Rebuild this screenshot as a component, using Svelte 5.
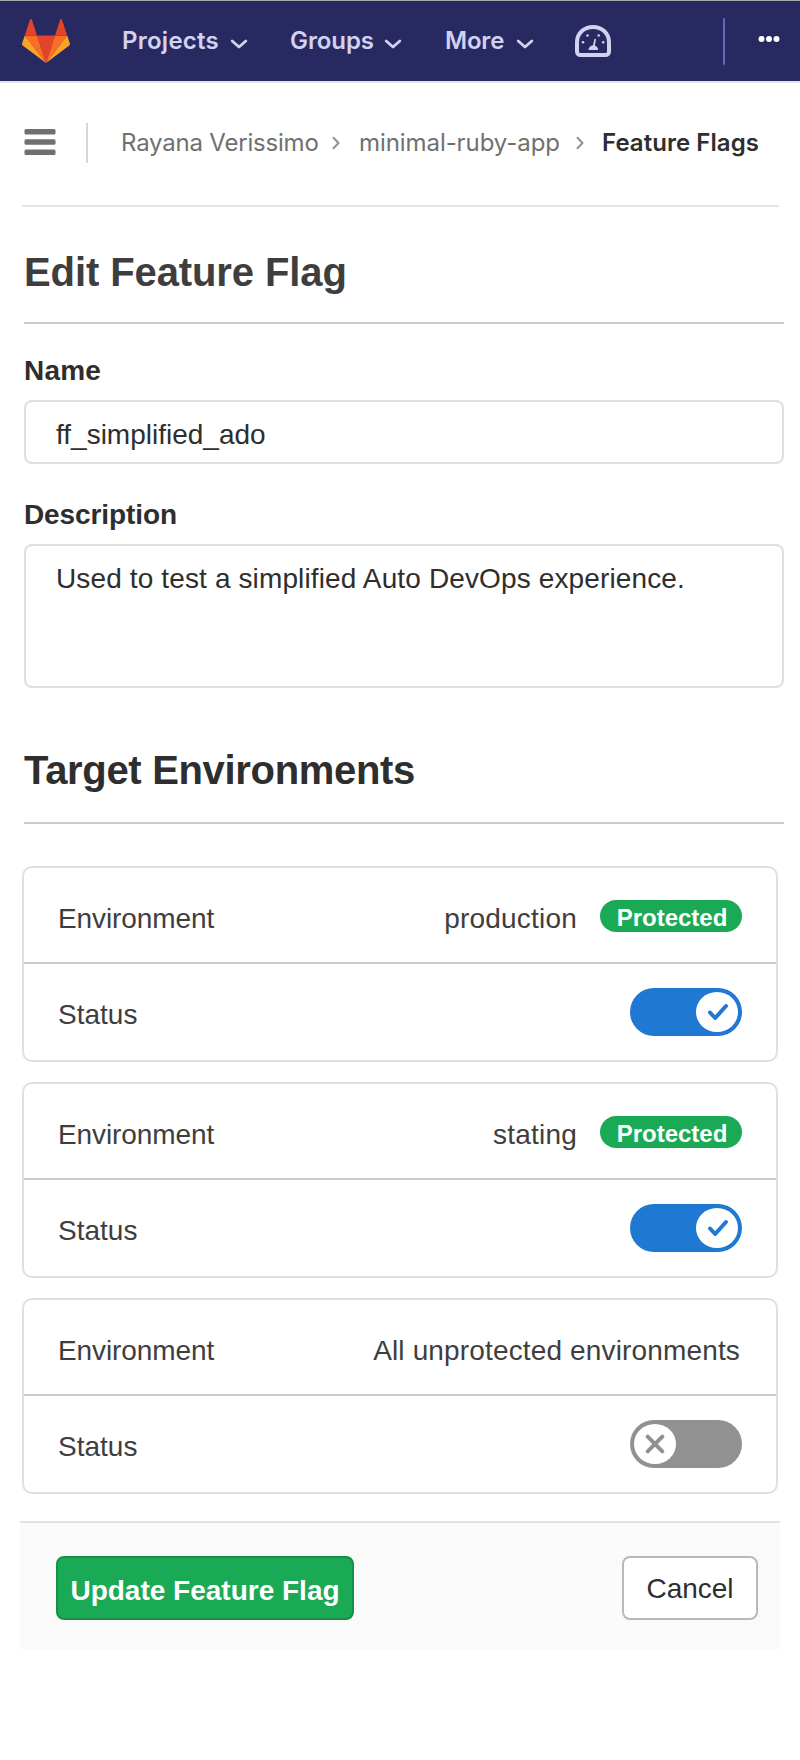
<script>
  const menus = [
    { label: 'Projects', cls: 'projects' },
    { label: 'Groups', cls: 'groups' },
    { label: 'More', cls: 'more' }
  ];
  let environments = $state([
    { name: 'production', isProtected: true, active: true },
    { name: 'stating', isProtected: true, active: true },
    { name: 'All unprotected environments', isProtected: false, active: false }
  ]);
</script>

<header>
  <svg class="logo" viewBox="0 0 48 44" width="48" height="44">
    <path fill="#e24329" d="M24 44 15 16.5h18z" />
    <path fill="#fc6d26" d="M24 44 15 16.5H2.8z" />
    <path fill="#fca326" d="M2.8 16.5.1 24.6c-.2.7 0 1.4.6 1.8L24 44z" />
    <path fill="#e24329" d="M2.8 16.5H15L9.8.5C9.5-.3 8.4-.3 8.1.5z" />
    <path fill="#fc6d26" d="M24 44 33 16.5h12.2z" />
    <path fill="#fca326" d="m45.2 16.5 2.7 8.1c.2.7 0 1.4-.6 1.8L24 44z" />
    <path fill="#e24329" d="M45.2 16.5H33L38.2.5c.3-.8 1.4-.8 1.7 0z" />
  </svg>
  <nav>
    {#each menus as menu}
      <a class={menu.cls} href="#top">
        <span>{menu.label}</span>
        <svg class="chev" viewBox="0 0 18 10" width="18" height="10"><path d="M2.2 2 9 8l6.8-6" /></svg>
      </a>
    {/each}
    <svg class="gauge" viewBox="0 0 36 32" width="36" height="32">
      <path d="M2 17C2 8.500 9 2 18 2s16 6.500 16 15v9.500c0 2-1.500 3.500-3.500 3.500h-25C3.500 30 2 28.500 2 26.500z" fill="none" stroke="#d1d1f0" stroke-width="4" />
      <g fill="#d1d1f0">
        <circle cx="12.500" cy="10.500" r="1.300" /><circle cx="23.700" cy="10.500" r="1.300" />
        <circle cx="8" cy="17.300" r="1.300" /><circle cx="28.200" cy="17.300" r="1.300" />
        <path d="M19.300 14.500a.8.8 0 0 1 1.600.300l-1 5.800c1.900.700 3.200 2.300 3.200 4.400h-9.600c0-2.300 1.900-4.300 4.500-4.700z" />
      </g>
    </svg>
  </nav>
  <span class="rule"></span>
  <svg class="dots" viewBox="0 0 22 8" width="22" height="8"><circle cx="3.500" cy="4" r="3" /><circle cx="11" cy="4" r="3" /><circle cx="18.500" cy="4" r="3" /></svg>
</header>

<div class="crumbs">
  <svg class="burger" viewBox="0 0 32 28" width="32" height="28"><rect x=".5" y="1" width="31" height="5.500" rx="1.500" /><rect x=".5" y="11.200" width="31" height="5.500" rx="1.500" /><rect x=".5" y="21.500" width="31" height="5.500" rx="1.500" /></svg>
  <span class="bar"></span>
  <span class="c1">Rayana Verissimo</span>
  <svg class="sep s1" viewBox="0 0 8 14" width="8" height="14"><path d="m1.500 1.700 5 5.300-5 5.300" /></svg>
  <span class="c2">minimal-ruby-app</span>
  <svg class="sep s2" viewBox="0 0 8 14" width="8" height="14"><path d="m1.500 1.700 5 5.300-5 5.300" /></svg>
  <span class="c3">Feature Flags</span>
</div>

<main>
  <h1>Edit Feature Flag</h1>
  <label class="nl" for="name">Name</label>
  <div class="field name" id="name">ff_simplified_ado</div>
  <label class="dl" for="description">Description</label>
  <div class="field area" id="description">Used to test a simplified Auto DevOps experience.</div>
  <h2>Target Environments</h2>
</main>

<section>
  {#each environments as env}
    <article>
      <div class="row">
        <span class="key">Environment</span>
        <div class="value" class:alone={!env.isProtected}>
          <span>{env.name}</span>
          {#if env.isProtected}<span class="badge">Protected</span>{/if}
        </div>
      </div>
      <div class="row status">
        <span>Status</span>
        <button class="toggle" class:on={env.active} aria-label="Status" onclick={() => (env.active = !env.active)}>
          <span class="knob">
            {#if env.active}
              <svg viewBox="0 0 22 18" width="22" height="18"><path d="m3 9.500 5.200 5.500L19 3" /></svg>
            {:else}
              <svg viewBox="0 0 20 20" width="20" height="20"><path d="m2.700 2.700 14.600 14.600m0-14.600-14.600 14.600" /></svg>
            {/if}
          </span>
        </button>
      </div>
    </article>
  {/each}
</section>

<footer>
  <button class="update">Update Feature Flag</button>
  <button class="cancel">Cancel</button>
</footer>

<style>
  :global(body) { background: #fff; color: #2e2e2e; font-family: 'Liberation Sans', Arial, sans-serif; font-size: 28px; line-height: 32px; }
  :global(*) { box-sizing: border-box; }
  svg { display: block; flex: none; }
  span { white-space: nowrap; }
  header { display: flex; height: 83px; border-top: 1px solid #a9a9b0; border-bottom: 2px solid #e4e4ef; background: #292961; }
  .logo { margin: 18px 0 0 22px; }
  nav { display: flex; margin-left: 52px; flex: 1; }
  nav a { display: flex; color: #d1d1f0; text-decoration: none; font: 600 24px/32px Inter, sans-serif; padding-top: 24px; }
  .projects { width: 167px; }
  .groups { width: 155px; padding-left: 1px; }
  .more { width: 131px; padding-left: 1px; }
  .projects span { width: 108px; letter-spacing: .25px; }
  .groups span { width: 94px; letter-spacing: -.1px; }
  .more span { width: 71px; letter-spacing: -.2px; }
  .chev { margin-top: 14px; }
  .chev path { fill: none; stroke: #d1d1f0; stroke-width: 2.8; stroke-linecap: round; stroke-linejoin: round; }
  .gauge { margin-top: 24px; }
  .rule { width: 2px; height: 47px; margin: 17px 33px 0 0; background: #6666b8; border-radius: 1px; }
  .dots { margin: 34px 20px 0 0; fill: #fff; }
  .crumbs { display: flex; align-items: center; width: 757px; height: 124px; margin-left: 22px; padding: 0 0 4px 2px; border-bottom: 2px solid #e3e3e3; color: #707070; font: 400 24px/32px Inter, sans-serif; }
  .crumbs > span:not(.bar) { padding-top: 2px; }
  .burger { fill: #707070; }
  .bar { width: 2px; height: 40px; margin: 2px 33px 0 30px; background: #d6d6d6; }
  .c1 { width: 211px; letter-spacing: -.2px; }
  .c2 { width: 217px; letter-spacing: -.07px; }
  .c3 { color: #2e2e2e; font-weight: 600; letter-spacing: .05px; }
  .s1 { margin-right: 19px; }
  .s2 { margin-right: 18px; }
  .sep { margin-top: 2px; }
  .sep path { fill: none; stroke: #919191; stroke-width: 2; stroke-linecap: round; stroke-linejoin: round; }
  main { width: 760px; margin-left: 24px; }
  h1, h2 { margin: 0; font-weight: 700; font-size: 40px; line-height: 48px; border-bottom: 2px solid #ccc; }
  h1 { height: 117px; padding-top: 41px; color: #3e3e3e; letter-spacing: -.1px; }
  h2 { height: 136px; padding-top: 58px; letter-spacing: -.32px; }
  label { display: block; font-weight: 700; }
  .nl { height: 76px; padding-top: 31px; letter-spacing: .2px; }
  .dl { height: 80px; padding-top: 35px; letter-spacing: -.1px; }
  .field { border: 2px solid #dfdfdf; border-radius: 8px; padding-left: 30px; }
  .name { height: 64px; padding-top: 17px; }
  .area { height: 144px; padding-top: 17px; letter-spacing: .13px; }
  section { display: flex; flex-direction: column; gap: 20px; width: 756px; margin: 42px 0 0 22px; color: #3e3e3e; }
  article { height: 196px; border: 2px solid #dfdfdf; border-radius: 10px; }
  .row { display: flex; justify-content: space-between; height: 96px; padding: 35px 34px 0 34px; border-bottom: 2px solid #ccc; }
  .status { border: 0; }
  .key { letter-spacing: -.1px; }
  .value { display: flex; letter-spacing: .2px; }
  .alone { padding-right: 2px; letter-spacing: .15px; }
  .badge { height: 32px; width: 142px; margin: -3px 0 0 23px; border-radius: 16px; background: #1aaa55; color: #fff; text-align: center; font-weight: 700; font-size: 24px; line-height: 36px; letter-spacing: 0; padding-left: 2px; }
  button { font: inherit; margin: 0; padding: 0; }
  .toggle { display: flex; width: 112px; height: 48px; margin-top: -11px; padding: 4px; border: 0; border-radius: 24px; background: #919191; }
  .toggle.on { background: #1f78d1; justify-content: flex-end; }
  .knob { display: flex; align-items: center; justify-content: center; width: 42px; height: 40px; border-radius: 21px / 20px; background: #fff; }
  .knob path { fill: none; stroke: #919191; stroke-width: 4; stroke-linecap: round; stroke-linejoin: round; }
  .on .knob svg { margin-left: 2px; }
  .on .knob path { stroke: #1f78d1; }
  footer { display: flex; justify-content: space-between; width: 760px; height: 128px; margin: 27px 0 0 20px; padding: 33px 22px 0 36px; border-top: 2px solid #e2e2e2; background: #fafafa; }
  footer button { height: 64px; border-radius: 8px; }
  .update { width: 298px; border: 2px solid #168f48; background: #1aaa55; color: #fff; font-weight: 700; padding-top: 6px; }
  .cancel { width: 136px; border: 2px solid #b9b9b9; background: #fff; color: #2e2e2e; padding-top: 2px; }
</style>
